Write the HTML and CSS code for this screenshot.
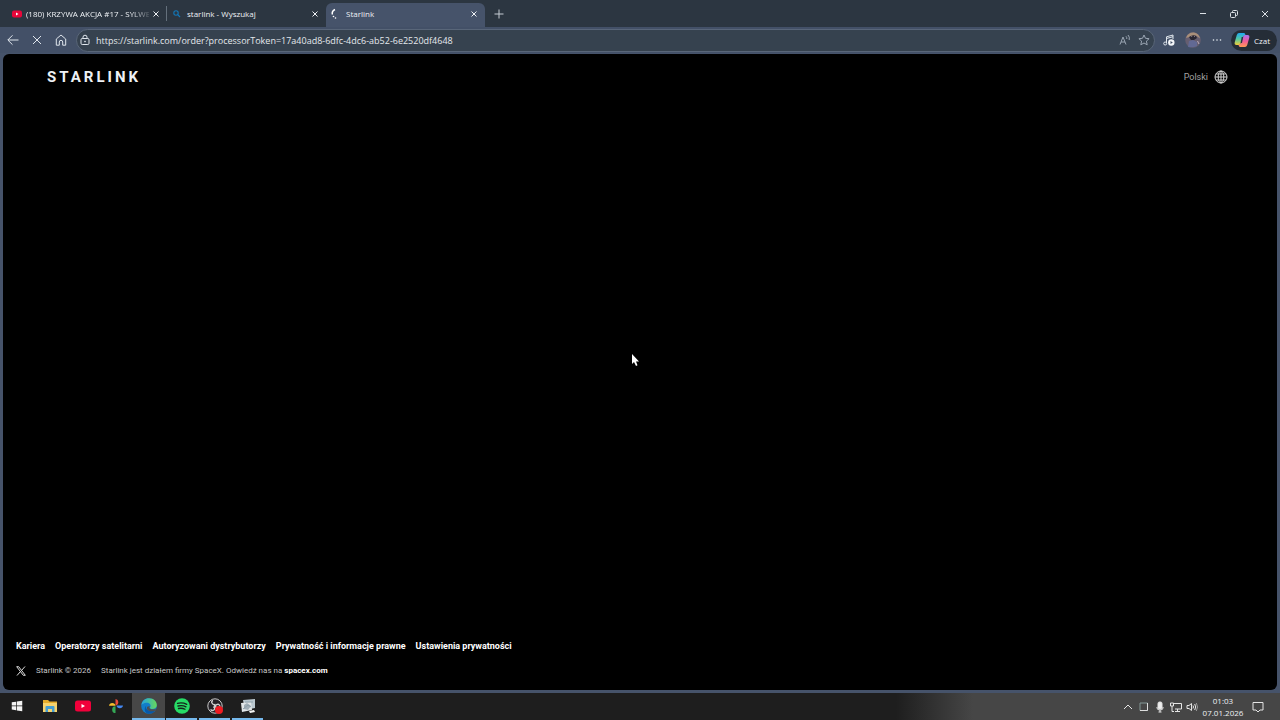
FILE: index.html
```html
<!DOCTYPE html>
<html lang="pl">
<head>
<meta charset="utf-8">
<meta name="viewport" content="width=device-width, initial-scale=1">
<title>Starlink</title>
<link rel="stylesheet" href="styles.css">
</head>
<body>
<div class="desktop">
  <div class="browser">
    <div class="tabbar">
      <div class="tab tab-first">
        <svg class="favicon" viewBox="0 0 12 12" aria-hidden="true"><rect x="1" y="2.500" width="10" height="7" rx="2" fill="#e8063a"/><path d="M5 4.500v3L7.500 6z" fill="#fff"/></svg>
        <button class="tab-title fade">(180) KRZYWA AKCJA #17 - SYLWE</button>
        <button class="tab-close" aria-label="Zamknij kartę"><svg viewBox="0 0 8 8"><path d="M1.500 1.500l5 5M6.500 1.500l-5 5"/></svg></button>
      </div>
      <div class="tab tab-search">
        <svg class="favicon" viewBox="0 0 12 12" aria-hidden="true"><circle cx="5" cy="5" r="2.200" fill="none" stroke="#1277b8" stroke-width="1.100"/><path d="M6.700 6.700L9 9" stroke="#1277b8" stroke-width="1.200"/></svg>
        <button class="tab-title">starlink - Wyszukaj</button>
        <button class="tab-close" aria-label="Zamknij kartę"><svg viewBox="0 0 8 8"><path d="M1.500 1.500l5 5M6.500 1.500l-5 5"/></svg></button>
      </div>
      <div class="tab tab-active">
        <svg class="favicon" viewBox="0 0 12 12" aria-hidden="true"><path d="M5 1.500C2.600 2.500 2 4.500 2.300 6.500" fill="none" stroke="#fff" stroke-width="1.500"/><circle cx="3.500" cy="8.500" r=".8" fill="#fff"/><circle cx="5.500" cy="10" r=".8" fill="#fff"/></svg>
        <button class="tab-title">Starlink</button>
        <button class="tab-close" aria-label="Zamknij kartę"><svg viewBox="0 0 8 8"><path d="M1.500 1.500l5 5M6.500 1.500l-5 5"/></svg></button>
      </div>
      <button class="new-tab" aria-label="Nowa karta"><svg viewBox="0 0 12 12"><path d="M6 1.500v9M1.500 6h9"/></svg></button>
      <div class="window-controls">
        <button aria-label="Minimalizuj"><svg viewBox="0 0 10 10"><path d="M2 4.500h6"/></svg></button>
        <button aria-label="Przywróć"><svg viewBox="0 0 10 10"><rect x="1.500" y="3.500" width="5" height="5" rx="1"/><path d="M3.500 3.500V2.500a1 1 0 0 1 1-1h3a1 1 0 0 1 1 1v3a1 1 0 0 1-1 1h-1"/></svg></button>
        <button aria-label="Zamknij"><svg viewBox="0 0 10 10"><path d="M2 2l6 6M8 2L2 8"/></svg></button>
      </div>
    </div>

    <div class="toolbar">
      <div class="nav">
        <button aria-label="Wstecz"><svg viewBox="0 0 14 14"><path d="M12.500 7H2M6.500 2.300L1.800 7l4.700 4.700"/></svg></button>
        <button aria-label="Zatrzymaj"><svg viewBox="0 0 14 14"><path d="M3 3l8 8M11 3l-8 8"/></svg></button>
        <button aria-label="Strona główna"><svg viewBox="0 0 14 14"><path d="M2.300 6L7 2l4.700 4v6.200H8.700V9a1.700 1.700 0 0 0-3.400 0v3.200h-3z" stroke-linejoin="round"/></svg></button>
      </div>
      <div class="address">
        <svg class="lock" viewBox="0 0 12 12" aria-hidden="true"><rect x="2" y="4.500" width="8" height="6" rx="1.200"/><path d="M4 4.500V3.200a2 2 0 0 1 4 0v1.300"/><circle cx="6" cy="7.500" r=".5"/></svg>
        <input class="url" type="text" aria-label="Adres" value="https://starlink.com/order?processorToken=17a40ad8-6dfc-4dc6-ab52-6e2520df4648">
        <button class="dim" aria-label="Czytaj na głos"><svg viewBox="0 0 12 12"><path d="M1 10.500L4 3l3 7.500M2 8h4M7 2.300q1 1 .8 2.700M9 1q2 2 1.200 5"/></svg></button>
        <button class="dim star" aria-label="Dodaj do ulubionych"><svg viewBox="0 0 12 12"><path d="M6 1l1.500 3.300 3.600.4-2.700 2.400.8 3.700L6 9l-3.200 1.800.8-3.700L.9 4.700l3.600-.4z" stroke-linejoin="round"/></svg></button>
      </div>
      <button class="tool" aria-label="Muzyka"><svg viewBox="0 0 14 14"><path d="M4.500 10V3.800L11 2v4M4.500 5.500L11 3.700"/><circle cx="3.200" cy="10.500" r="1.500"/><circle cx="9.300" cy="9.500" r="3.200" fill="#f3f5f8" stroke="none"/><path d="M8.500 8v3l2.300-1.500z" fill="#435067" stroke="none"/></svg></button>
      <button class="avatar" aria-label="Profil"><svg viewBox="0 0 16 16"><circle cx="8" cy="8" r="7.800" fill="#665e70" stroke="none"/><path d="M1 6q2-6 8-5.500 5 1 6 6l-4-3-5 1z" fill="#a88f7a" stroke="none"/><path d="M4 5q4-3 7-1l1 2-3 2H6z" fill="#282632" stroke="none"/><path d="M3 15l1-6 4-1 4 2v4q-4 2-9 1z" fill="#626994" stroke="none"/><path d="M6.500 4.500h.6M9 4.500h.6M12.500 9l1.500 3" stroke="#b9aab8"/></svg></button>
      <button class="tool" aria-label="Więcej"><svg viewBox="0 0 14 14"><g fill="#e8edf3" stroke="none"><circle cx="3.500" cy="7" r=".8"/><circle cx="7" cy="7" r=".8"/><circle cx="10.500" cy="7" r=".8"/></g></svg></button>
      <button class="chat">
        <svg viewBox="0 0 16 16" aria-hidden="true"><defs><linearGradient id="coolInk" x2="0" y2="1"><stop stop-color="#20a9f2"/><stop offset=".5" stop-color="#52c9a4"/><stop offset="1" stop-color="#f2cd35"/></linearGradient><linearGradient id="warmInk" x2="0" y2="1"><stop stop-color="#a873f2"/><stop offset=".5" stop-color="#f1599a"/><stop offset="1" stop-color="#ff9a55"/></linearGradient></defs><path d="M5 1h5q1 0 1.500 2L9 4.500 7 11q-.8 2-2 2H2.500Q0 13 .8 10l2-7Q3.500 1 5 1z" fill="url(#coolInk)"/><path d="M11 15H6q-1 0-1.500-2L7 11.500 9 5q.8-2 2-2h2.500q2.500 0 1.700 3l-2 7Q12.500 15 11 15z" fill="url(#warmInk)"/><path d="M7.700 5h1.500L8 11H6.500z" fill="#273242"/></svg>
        <span>Czat</span>
      </button>
    </div>

    <main class="page">
      <header class="site-header">
        <a class="brand" href="#">STARLINK</a>
        <button class="language"><span>Polski</span><svg viewBox="0 0 14 14" aria-hidden="true"><circle cx="7" cy="7" r="6"/><ellipse cx="7" cy="7" rx="2.800" ry="6"/><path d="M7 1v12M1 7h12M2 4h10M2 10h10"/></svg></button>
      </header>
      <footer class="site-footer">
        <nav class="footer-links">
          <a href="#">Kariera</a>
          <a href="#">Operatorzy satelitarni</a>
          <a href="#">Autoryzowani dystrybutorzy</a>
          <a href="#">Prywatność i informacje prawne</a>
          <a href="#">Ustawienia prywatności</a>
        </nav>
        <div class="legal">
          <a class="x-link" href="#" aria-label="X"><svg viewBox="0 0 10 10"><path d="M.7.700h2L9.300 9.300h-2zM9 .5L5.600 4.400M4.400 5.600L1 9.500"/></svg></a>
          <span>Starlink © 2026</span>
          <span>Starlink jest działem firmy SpaceX. Odwiedź nas na <a href="#">spacex.com</a></span>
        </div>
      </footer>
    </main>
  </div>

  <div class="taskbar">
    <div class="apps">
      <button aria-label="Start"><svg viewBox="0 0 16 16"><path d="M2 3.800L7 3v4.500H2zM7.800 2.900L14 2v5.500H7.800zM2 8.300h5v4.500l-5-.8zM7.800 8.300H14V14l-6.200-.9z" fill="#f4f4f4"/></svg></button>
      <button aria-label="Eksplorator plików"><svg viewBox="0 0 16 16"><path d="M1 2h5l1.500 1.500H15V14H1z" fill="#e5ac2c"/><path d="M1 5h14v9H1z" fill="#f6d36e"/><path d="M3.500 14V9q0-1 1-1h7q1 0 1 1v5H10v-3H6v3z" fill="#459ed2"/></svg></button>
      <button aria-label="YouTube"><svg viewBox="0 0 16 16"><rect y="2.500" width="16" height="11" rx="2.500" fill="#f1003a"/><path d="M6.500 6v4l3.500-2z" fill="#fff"/></svg></button>
      <button aria-label="Zdjęcia"><svg viewBox="0 0 16 16"><path d="M7.500 7.500V1A3.300 3.300 0 0 1 7.500 7.500z" fill="#ea4939"/><path d="M7.500 7.700H1A3.300 3.300 0 0 1 7.500 7.700z" fill="#f5bd2c"/><path d="M8.500 7.500H15A3.300 3.300 0 0 1 8.500 7.500z" fill="#4386ef"/><path d="M7.500 8.300V15A3.300 3.300 0 0 1 7.500 8.300z" fill="#34a755"/></svg></button>
      <button class="open current" aria-label="Edge"><svg viewBox="0 0 16 16"><defs><linearGradient id="edgeTop"><stop stop-color="#24a3df"/><stop offset="1" stop-color="#67d95a"/></linearGradient></defs><circle cx="8" cy="8" r="7.800" fill="#127dc8"/><path d="M.4 7C1 2.500 4 .2 8 .2c5 0 8 3.500 7.800 7-.2 3-3 4.300-6 3.600-1.300-.3-1-1-.5-1.800C10.500 6.500 8 4.300 5 4.700 3 5 1.200 6 .4 7z" fill="url(#edgeTop)"/><path d="M5.500 7.500c-2 3 1 6.500 8.700 5.200a8 8 0 0 1-8 2.800c-3-1.500-3.300-6-.7-8z" fill="#0758a9"/><path d="M9 8c-2 2 .5 4.300 6 2.700l-.7 2C9 14.500 4.500 12 6.200 8.700z" fill="#4d4f51"/></svg></button>
      <button class="open" aria-label="Spotify"><svg viewBox="0 0 16 16"><circle cx="8" cy="8" r="7.800" fill="#27dc66"/><path d="M3.500 5.300q5-1.200 9.300 1M4 8q4.500-1 8 .8M4.500 10.500q3.600-.8 6.500.8" fill="none" stroke="#15251b" stroke-width="1.300" stroke-linecap="round"/></svg></button>
      <button class="open" aria-label="OBS"><svg viewBox="0 0 16 16"><circle cx="8" cy="8" r="7.200" fill="#252328" stroke="#c8c8c8"/><path d="M8 7C4 6 4 3 6 2.500M8 8c3-3 5-1.500 5 1M7.500 8.500c1 4-2 5-4 3M8 7l-1 2 2 0z" fill="none" stroke="#cdcdcd" stroke-width="1.400"/><circle cx="12" cy="12" r="4" fill="#ef1b22"/></svg></button>
      <button class="open" aria-label="Aplikacja"><svg viewBox="0 0 16 16"><path d="M3 2l12-1v9L5 12z" fill="#bac7cf"/><path d="M1 5l10-1 1 8-10 2z" fill="#e2e6e8"/><path d="M4 7l3-2 4 3-3 4-4-1z" fill="#a2afb8"/><path d="M9 13l5-1 1 2-5 1z" fill="#f4f4f4"/><path d="M5 4h8M3 11l5-4 3 2" stroke="#8da0aa" fill="none"/></svg></button>
    </div>
    <div class="tray">
      <button aria-label="Pokaż ukryte ikony"><svg viewBox="0 0 12 12"><path d="M2 8l4-4 4 4"/></svg></button>
      <button aria-label="Urządzenie"><svg viewBox="0 0 12 12"><path d="M2 2h7.500v7.500H2z" stroke="#829795"/><path d="M9.500 2v7.500H2" stroke="#dedede"/></svg></button>
      <button aria-label="Mikrofon"><svg viewBox="0 0 12 12"><rect x="4" y="1" width="4" height="7" rx="1.500" fill="#eee"/><path d="M3 6v1q0 2 3 2t3-2V6M6 9v2M4.500 11h3"/></svg></button>
      <button aria-label="Sieć"><svg viewBox="0 0 12 12"><path d="M4 2.500h7.500v5.500H5M7.500 8v2M5 10.500h5M.5 2h3v3h-3zM2 5v5.500h2"/></svg></button>
      <button aria-label="Głośność"><svg viewBox="0 0 12 12"><path d="M1 4.500h2l2.500-2v7L3 7.500H1zM7 4.500q1 1.500 0 3M8.700 3q2 3 0 6"/><path d="M10.300 2q2.500 4 0 8" stroke="#999"/></svg></button>
      <time class="clock" datetime="2026-01-07T01:03"><span>01:03</span><span>07.01.2026</span></time>
      <button class="notice" aria-label="Powiadomienia"><svg viewBox="0 0 12 12"><path d="M1 1.500h10v7.500H8L6 11 4 9H1z"/></svg></button>
    </div>
  </div>
</div>
<svg class="cursor" viewBox="0 0 8 13" aria-hidden="true"><path d="M1 0v10l2-2 2 4 1.500-.7L5 7.500h3z" fill="#fff"/></svg>
</body>
</html>
```
FILE: styles.css
```css
* { box-sizing: border-box; }
body { margin: 0; background: #000; font-family: "Open Sans", "Noto Sans", sans-serif; color: #eef1f5; }
button { border: 0; padding: 0; background: none; color: inherit; font: inherit; display: flex; align-items: center; justify-content: center; }
a { color: inherit; text-decoration: none; }
svg { display: block; flex: none; fill: none; stroke: none; }

.desktop { min-height: 100vh; display: flex; flex-direction: column; }
.browser { flex: 1; display: flex; flex-direction: column; background: #46536a; padding-bottom: 2px; }

.tabbar { height: 27px; display: flex; align-items: stretch; background: #2c3641; }
.tab { flex: 0 1 159px; min-width: 0; display: flex; align-items: center; gap: 4px; padding: 0 7px 0 4px; font-size: 8px; }
.tab-first { flex-basis: 167px; gap: 3px; padding-left: 11px; padding-right: 6px; border-right: 1px solid #59636e; border-image: linear-gradient(transparent 25%, #64707c 25%, #64707c 75%, transparent 75%) 1; }
.tab-active { margin-top: 3px; padding-bottom: 3px; background: #46536a; border-radius: 6px 6px 0 0; }
.favicon { width: 12px; height: 12px; }
.tab-title { flex: 1; min-width: 0; white-space: nowrap; justify-content: flex-start; height: 16px; }
.fade { mask-image: linear-gradient(to right, #000 85%, rgba(0, 0, 0, 0.2)); }
.tab-close svg { width: 8px; height: 8px; stroke: #eef1f5; }
.new-tab { width: 27px; }
.new-tab svg { width: 12px; height: 12px; stroke: #c5ccd4; }
.window-controls { margin-left: auto; display: flex; }
.window-controls button { width: 31px; }
.window-controls svg { width: 10px; height: 10px; stroke: #dce1e6; }

.toolbar { height: 26px; display: flex; align-items: center; padding: 0 3px 0 6px; background: #435067; }
.toolbar svg { stroke: #e0e6ed; }
.nav { display: flex; gap: 10px; }
.nav svg, .tool svg { width: 14px; height: 14px; }
.address { flex: 1; min-width: 0; height: 23px; display: flex; align-items: center; margin: 0 7px 0 8px; padding: 0 4px 0 2px; background: #36424f; border: 1px solid #596679; border-radius: 12px; }
.lock { width: 12px; height: 12px; }
.url { flex: 1; min-width: 0; border: 0; padding: 0; margin-left: 5px; background: none; outline: 0; color: #e4e8ec; font: 9px "Open Sans", "Noto Sans", sans-serif; }
.address .dim svg { width: 12px; height: 12px; stroke: #9ba6b3; }
.star { margin-left: 7px; }
.avatar { margin: 0 9px; }
.avatar svg { width: 16px; height: 16px; }
.chat { height: 21px; gap: 4px; margin-left: 7px; padding: 0 7px 0 3px; border-radius: 11px; background: #252d37; font-size: 8px; }
.chat svg { width: 16px; height: 16px; stroke: none; }

.page { flex: 1; display: flex; flex-direction: column; justify-content: space-between; margin: 1px 3px; padding: 13px; background: #000; border-radius: 6px; font-family: Roboto, sans-serif; }
.site-header { display: flex; align-items: center; justify-content: space-between; padding: 0 36px 0 31px; }
.brand { font-size: 15px; line-height: 20px; font-weight: 700; letter-spacing: 3px; }
.language { gap: 6px; color: #a3a3a3; font-size: 9px; }
.language svg { width: 14px; height: 14px; stroke: #d2d2d2; }
.footer-links { display: flex; flex-wrap: wrap; gap: 10px; font-size: 9px; line-height: 12px; font-weight: 700; color: #fff; }
.legal { display: flex; align-items: center; gap: 10px; margin-top: 13px; font-size: 8px; line-height: 12px; color: #c8c8c8; }
.legal a { color: #fff; font-weight: 700; }
.x-link svg { width: 10px; height: 10px; stroke: #ddd; }

.taskbar { height: 27px; display: flex; justify-content: space-between; background: linear-gradient(to right, #1e1e1e 70%, #464646 76%); }
.apps { display: flex; }
.apps button { width: 33px; border-bottom: 2px solid transparent; }
.apps .open { border-image: linear-gradient(to right, transparent 8%, #76b9ed 8%, #76b9ed 92%, transparent 92%) 2; }
.apps .current { background: #474747; border-image: none; border-color: #76b9ed; }
.apps svg { width: 16px; height: 16px; }
.apps button:first-child svg { width: 14px; height: 14px; }
.tray { display: flex; align-items: center; gap: 4px; padding-right: 16px; }
.tray svg { width: 12px; height: 12px; stroke: #e5e5e5; }
.clock { display: flex; flex-direction: column; align-items: center; width: 42px; font-size: 8px; line-height: 12px; }
.notice { margin-left: 4px; }

.cursor { position: absolute; left: 631px; top: 354px; width: 8px; height: 13px; }
```
